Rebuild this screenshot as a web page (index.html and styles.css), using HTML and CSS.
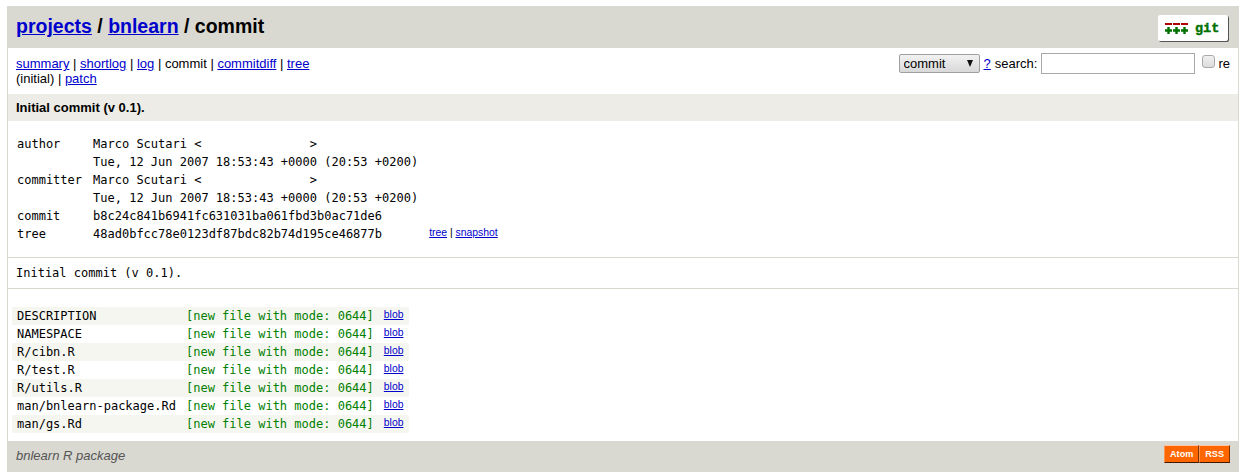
FILE: index.html
```html
<!DOCTYPE html>
<html lang="en">
<head>
<meta charset="utf-8">
<title>bnlearn commit</title>
<link rel="stylesheet" href="styles.css">
</head>
<body>
<header class="page-header">
  <div class="crumbs"><a href="#">projects</a> / <a href="#">bnlearn</a> / commit</div>
  <svg class="git-logo" width="72" height="28" viewBox="0 0 72 28" aria-label="git">
    <rect x="1" y="1" width="70" height="26" rx="2" fill="#555"/>
    <rect x="0" y="0" width="70" height="26" rx="2" fill="#fff"/>
    <g fill="#b00000">
      <rect x="7" y="8" width="7" height="2"/>
      <rect x="15" y="8" width="7" height="2"/>
      <rect x="23" y="8" width="7" height="2"/>
    </g>
    <g fill="#007000">
      <path d="M9.300 12h2.400v2.300H14v2.400h-2.300V19H9.300v-2.300H7v-2.400h2.300z"/>
      <path d="M17.300 12h2.400v2.300H22v2.400h-2.300V19h-2.400v-2.300H15v-2.400h2.300z"/>
      <path d="M25.300 12h2.400v2.300H30v2.400h-2.300V19h-2.400v-2.300H23v-2.400h2.300z"/>
    </g>
    <text class="git-word" x="37" y="17">git</text>
  </svg>
</header>
<nav class="page-nav">
  <div class="nav-links">
    <div><a href="#">summary</a> | <a href="#">shortlog</a> | <a href="#">log</a> | commit | <a href="#">commitdiff</a> | <a href="#">tree</a></div>
    <div>(initial) | <a href="#">patch</a></div>
  </div>
  <form class="search">
    <span class="select-box"><select class="select"><option>commit</option></select></span>
    <a href="#" class="help">?</a>
    <span>search:</span>
    <input class="query" type="text">
    <input class="regex" type="checkbox">
    <span>re</span>
  </form>
</nav>
<div class="title">Initial commit (v 0.1).</div>
<table class="object">
  <tr><td>author</td><td>Marco Scutari &lt;<span class="blank">               </span>&gt;</td><td></td></tr>
  <tr><td></td><td>Tue, 12 Jun 2007 18:53:43 +0000 (20:53 +0200)</td><td></td></tr>
  <tr><td>committer</td><td>Marco Scutari &lt;<span class="blank">               </span>&gt;</td><td></td></tr>
  <tr><td></td><td>Tue, 12 Jun 2007 18:53:43 +0000 (20:53 +0200)</td><td></td></tr>
  <tr><td>commit</td><td>b8c24c841b6941fc631031ba061fbd3b0ac71de6</td><td></td></tr>
  <tr><td>tree</td><td>48ad0bfcc78e0123df87bdc82b74d195ce46877b</td><td class="link"><a href="#">tree</a> | <a href="#">snapshot</a></td></tr>
</table>
<div class="message">Initial commit (v 0.1).</div>
<table class="files">
  <tr class="dark"><td>DESCRIPTION</td><td class="status">[new file with mode: 0644]</td><td class="link"><a href="#">blob</a></td></tr>
  <tr><td>NAMESPACE</td><td class="status">[new file with mode: 0644]</td><td class="link"><a href="#">blob</a></td></tr>
  <tr class="dark"><td>R/cibn.R</td><td class="status">[new file with mode: 0644]</td><td class="link"><a href="#">blob</a></td></tr>
  <tr><td>R/test.R</td><td class="status">[new file with mode: 0644]</td><td class="link"><a href="#">blob</a></td></tr>
  <tr class="dark"><td>R/utils.R</td><td class="status">[new file with mode: 0644]</td><td class="link"><a href="#">blob</a></td></tr>
  <tr><td>man/bnlearn-package.Rd</td><td class="status">[new file with mode: 0644]</td><td class="link"><a href="#">blob</a></td></tr>
  <tr class="dark"><td>man/gs.Rd</td><td class="status">[new file with mode: 0644]</td><td class="link"><a href="#">blob</a></td></tr>
</table>
<footer class="page-footer">
  <div class="footer-text">bnlearn R package</div>
  <div class="feeds"><a href="#" class="feed">Atom</a><a href="#" class="feed">RSS</a></div>
</footer>
</body>
</html>
```
FILE: styles.css
```css
body {
  margin: 6px 5px 4px 7px;
  font-family: "Liberation Sans", Arial, sans-serif;
  font-size: 13px;
  color: #000;
  background: #fff;
  border: 1px solid #d9d8d1;
}
a { color: #0000cc; }
.page-header {
  display: flex;
  justify-content: space-between;
  align-items: flex-start;
  height: 25px;
  padding: 8px;
  font-size: 19.5px;
  font-weight: bold;
  background: #d9d8d1;
}
.git-logo { flex: none; }
.git-word {
  font-family: "Liberation Mono", monospace;
  font-size: 13.5px;
  font-weight: bold;
  fill: #007000;
  stroke: #007000;
  stroke-width: 0.4px;
}
.page-nav {
  display: flex;
  justify-content: space-between;
  padding: 0 8px;
}
.nav-links { padding: 8px 0; }
.search {
  display: flex;
  align-items: flex-start;
  padding-top: 5px;
  height: 24px;
}
.select-box { position: relative; display: block; margin: 1px 4px 0 0; }
.select-box::after {
  content: "";
  position: absolute;
  right: 7px;
  top: 6px;
  border-left: 3.5px solid transparent;
  border-right: 3.5px solid transparent;
  border-top: 7px solid #111;
  pointer-events: none;
}
.select {
  display: block;
  appearance: none;
  width: 81px;
  height: 19px;
  margin: 0;
  padding: 0 0 0 4px;
  font: 13px "Liberation Sans", Arial, sans-serif;
  color: #000;
  border: 1px solid #a0a0a0;
  border-radius: 2px;
  background: linear-gradient(#f2f2f2, #d8d8d8);
}
.help { margin: 3px 4px 0 0; }
.search span:not(.select-box) { margin-top: 3px; }
.query {
  width: 154px;
  height: 21px;
  box-sizing: border-box;
  margin: 0 7px 0 4px;
  padding: 1px 2px;
  border: 1px solid #a9a9a9;
  background: #fff;
}
.regex {
  appearance: none;
  width: 13px;
  height: 13px;
  margin: 2px 3px 0 0;
  box-sizing: border-box;
  border: 1px solid #a9a9a9;
  border-radius: 3px;
  background: linear-gradient(#f0f0f0, #dcdcdc);
}
.title {
  padding: 6px 8px;
  font-weight: bold;
  background: #edece6;
}
table {
  border-spacing: 0;
  padding: 8px 4px;
  font-family: "DejaVu Sans Mono", monospace;
  font-size: 12px;
}
td {
  padding: 2px 5px;
  vertical-align: top;
  white-space: pre;
}
.object { padding-top: 14px; padding-bottom: 14px; }
.object td:first-child { padding-right: 6px; }
td.link {
  font-family: "Liberation Sans", Arial, sans-serif;
  font-size: 10.4px;
}
.object td.link { padding-left: 6px; }
.files td.link { padding-right: 6px; }
.message {
  padding: 8px;
  font-family: "DejaVu Sans Mono", monospace;
  font-size: 12px;
  border-top: 1px solid #d9d8d1;
  border-bottom: 1px solid #d9d8d1;
}
.files { padding-top: 18px; }
.dark { background: #f6f6f0; }
.status { color: #008000; }
.page-footer {
  display: flex;
  justify-content: space-between;
  height: 22px;
  padding: 4px 8px;
  background: #d9d8d1;
}
.footer-text {
  line-height: 22px;
  color: #555;
  font-style: italic;
}
.feeds { display: flex; align-items: flex-start; }
.feed {
  padding: 3px 5px;
  line-height: 10px;
  border: 1px solid;
  border-color: #fcc7a5 #7d3302 #3e1a01 #ff954e;
  color: #fff;
  background: #ff6600;
  font-weight: bold;
  font-size: 9.1px;
  text-decoration: none;
}
```
